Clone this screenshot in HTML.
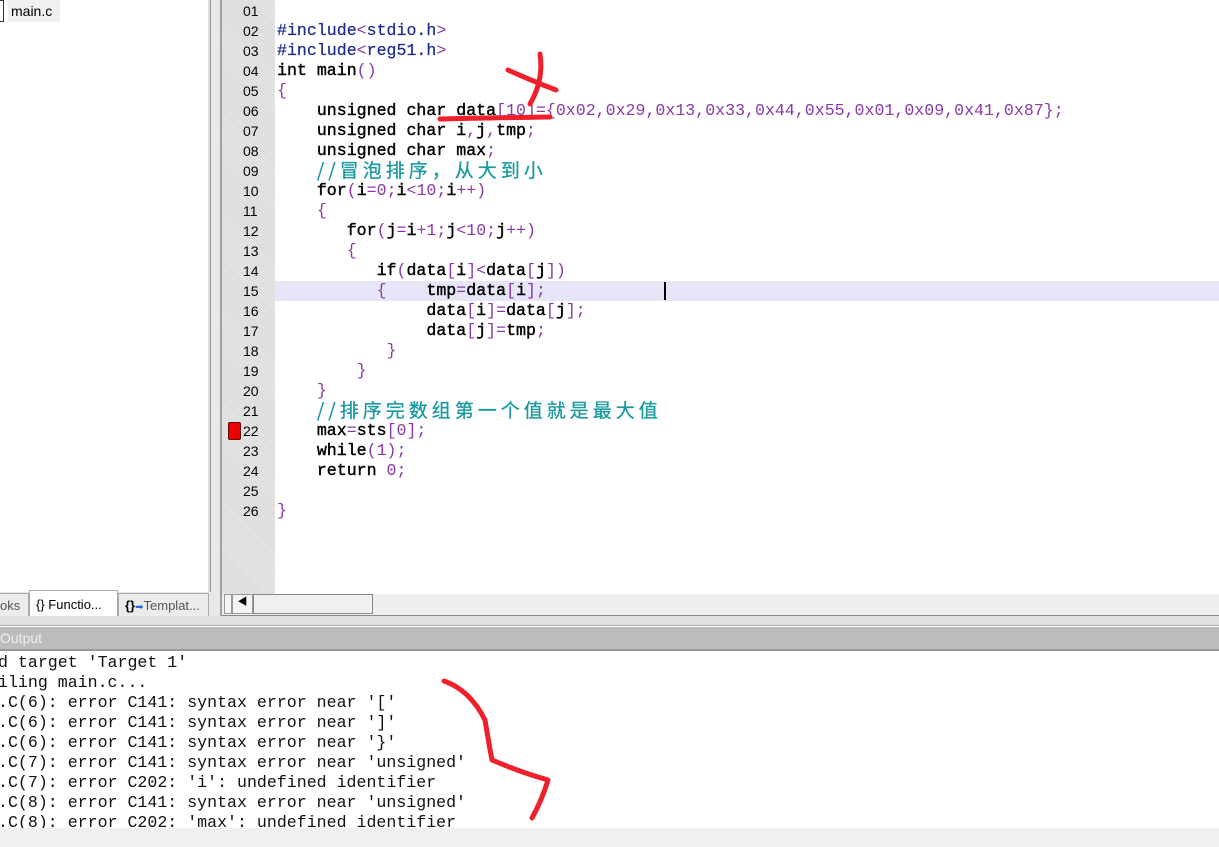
<!DOCTYPE html>
<html><head><meta charset="utf-8"><style>
*{margin:0;padding:0;box-sizing:border-box}
body{width:1219px;height:847px;overflow:hidden;background:#fff;position:relative;font-family:"Liberation Mono","Noto Sans CJK SC",monospace}
.abs{position:absolute}
.gut{left:222px;top:0;width:53px;height:594px;background-color:#e4e4e4;background-image:repeating-linear-gradient(45deg,#d4d4d4 0 1px,#ececec 1px 2px)}
.ln{position:absolute;left:243px;font-family:"Liberation Sans",sans-serif;font-size:14px;color:#000;height:20px;line-height:20px}
.cl{position:absolute;left:277px;font-size:16.6px;height:20px;line-height:20px;white-space:pre;color:#000;-webkit-text-stroke:0.4px #000}
.p{color:#8a3aa8;-webkit-text-stroke:0}
.c{color:#1a9aa0;-webkit-text-stroke:0.3px #1a9aa0;font-family:"Noto Sans CJK SC",sans-serif;font-size:19px;letter-spacing:4px;line-height:18px}
.out{position:absolute;left:-2px;font-size:16.6px;height:20px;line-height:20px;white-space:pre;color:#111}
</style></head><body>
<div class="abs" style="left:0;top:0;width:210px;height:594px;background:#fff"></div>
<div class="abs" style="left:0;top:0;width:4px;height:22px;border:1px solid #333;border-left:none"></div>
<div class="abs" style="left:8px;top:0;width:52px;height:22px;background:#f0f0f0;font-family:'Liberation Sans',sans-serif;font-size:14px;line-height:22px;padding-left:3px;color:#000">main.c</div>
<div class="abs" style="left:208px;top:0;width:3px;height:594px;background:#ddd;border-right:1px solid #999"></div>
<div class="abs" style="left:211px;top:0;width:11px;height:625px;background:#e8e8e8;border-right:2px solid #a0a0a0"></div>
<div class="abs" style="left:0;top:592px;width:220px;height:33px;background:#e8e8e8"></div>
<div class="abs" style="left:0;top:593px;width:29px;height:26px;background:#ececec;border:1px solid #aaa;border-left:none;font:13px 'Liberation Sans',sans-serif;color:#555;line-height:24px">oks</div>
<div class="abs" style="left:29px;top:590px;width:89px;height:29px;background:#fff;border:1px solid #aaa;font:13px 'Liberation Sans',sans-serif;color:#000;line-height:28px;padding-left:6px">{} Functio...</div>
<div class="abs" style="left:118px;top:593px;width:91px;height:26px;background:#ececec;border:1px solid #aaa;font:13px 'Liberation Sans',sans-serif;color:#555;line-height:24px;padding-left:6px"><b style="color:#000">{}</b><span style="color:#1a6ee0;font-size:10px">➡</span>Templat...</div>
<div class="abs gut"></div>
<div class="abs" style="left:275px;top:281px;width:944px;height:20px;background:#e6e6f8"></div>
<div class="abs" style="left:664px;top:282px;width:2px;height:18px;background:#000"></div>
<div class="abs" style="left:228px;top:422px;width:13px;height:18px;background:#e00;border:1px solid #600;border-radius:2px"></div>

<div class="ln" style="top:1px">01</div><div class="ln" style="top:21px">02</div><div class="ln" style="top:41px">03</div><div class="ln" style="top:61px">04</div><div class="ln" style="top:81px">05</div><div class="ln" style="top:101px">06</div><div class="ln" style="top:121px">07</div><div class="ln" style="top:141px">08</div><div class="ln" style="top:161px">09</div><div class="ln" style="top:181px">10</div><div class="ln" style="top:201px">11</div><div class="ln" style="top:221px">12</div><div class="ln" style="top:241px">13</div><div class="ln" style="top:261px">14</div><div class="ln" style="top:281px">15</div><div class="ln" style="top:301px">16</div><div class="ln" style="top:321px">17</div><div class="ln" style="top:341px">18</div><div class="ln" style="top:361px">19</div><div class="ln" style="top:381px">20</div><div class="ln" style="top:401px">21</div><div class="ln" style="top:421px">22</div><div class="ln" style="top:441px">23</div><div class="ln" style="top:461px">24</div><div class="ln" style="top:481px">25</div><div class="ln" style="top:501px">26</div>

<div class="cl" style="top:21px;color:#1a2a8a;-webkit-text-stroke:0.2px #1a2a8a">#include<span class="p">&lt;</span>stdio.h<span class="p">&gt;</span></div>
<div class="cl" style="top:41px;color:#1a2a8a;-webkit-text-stroke:0.2px #1a2a8a">#include<span class="p">&lt;</span>reg51.h<span class="p">&gt;</span></div>
<div class="cl" style="top:61px">int main<span class="p">()</span></div>
<div class="cl" style="top:81px"><span class="p">{</span></div>
<div class="cl" style="top:101px">    unsigned char data<span class="p">[10]={0x02,0x29,0x13,0x33,0x44,0x55,0x01,0x09,0x41,0x87};</span></div>
<div class="cl" style="top:121px">    unsigned char i<span class="p">,</span>j<span class="p">,</span>tmp<span class="p">;</span></div>
<div class="cl" style="top:141px">    unsigned char max<span class="p">;</span></div>
<div class="cl" style="top:161px">    <span class="c">//冒泡排序，从大到小</span></div>
<div class="cl" style="top:181px">    for<span class="p">(</span>i<span class="p">=0;</span>i<span class="p">&lt;10;</span>i<span class="p">++)</span></div>
<div class="cl" style="top:201px">    <span class="p">{</span></div>
<div class="cl" style="top:221px">       for<span class="p">(</span>j<span class="p">=</span>i<span class="p">+1;</span>j<span class="p">&lt;10;</span>j<span class="p">++)</span></div>
<div class="cl" style="top:241px">       <span class="p">{</span></div>
<div class="cl" style="top:261px">          if<span class="p">(</span>data<span class="p">[</span>i<span class="p">]&lt;</span>data<span class="p">[</span>j<span class="p">])</span></div>
<div class="cl" style="top:281px">          <span class="p">{</span>    tmp<span class="p">=</span>data<span class="p">[</span>i<span class="p">];</span></div>
<div class="cl" style="top:301px">               data<span class="p">[</span>i<span class="p">]=</span>data<span class="p">[</span>j<span class="p">];</span></div>
<div class="cl" style="top:321px">               data<span class="p">[</span>j<span class="p">]=</span>tmp<span class="p">;</span></div>
<div class="cl" style="top:341px">           <span class="p">}</span></div>
<div class="cl" style="top:361px">        <span class="p">}</span></div>
<div class="cl" style="top:381px">    <span class="p">}</span></div>
<div class="cl" style="top:401px">    <span class="c">//排序完数组第一个值就是最大值</span></div>
<div class="cl" style="top:421px">    max<span class="p">=</span>sts<span class="p">[0];</span></div>
<div class="cl" style="top:441px">    while<span class="p">(1);</span></div>
<div class="cl" style="top:461px">    return <span class="p">0;</span></div>
<div class="cl" style="top:501px"><span class="p">}</span></div>

<div class="abs" style="left:222px;top:594px;width:997px;height:22px;background:#efefef;border-bottom:1px solid #888"></div>
<div class="abs" style="left:224px;top:594px;width:8px;height:20px;border:1px solid #999;background:#f4f4f4"></div>
<div class="abs" style="left:232px;top:594px;width:21px;height:20px;border:1px solid #999;background:#f4f4f4;font-size:10px;line-height:18px;text-align:center">◀</div>
<div class="abs" style="left:253px;top:594px;width:120px;height:20px;border:1px solid #888;background:#f0f0f0"></div>
<div class="abs" style="left:0;top:616px;width:1219px;height:10px;background:#e0e0e0;border-bottom:1px solid #aaa"></div>
<div class="abs" style="left:0;top:627px;width:1219px;height:24px;background:#bcbcbc;border-bottom:2px solid #999;font:14px 'Liberation Sans',sans-serif;color:#eee;line-height:22px">Output</div>
<div class="out" style="top:653px">d target 'Target 1'</div>
<div class="out" style="top:673px">iling main.c...</div>
<div class="out" style="top:693px">.C(6): error C141: syntax error near '['</div>
<div class="out" style="top:713px">.C(6): error C141: syntax error near ']'</div>
<div class="out" style="top:733px">.C(6): error C141: syntax error near '}'</div>
<div class="out" style="top:753px">.C(7): error C141: syntax error near 'unsigned'</div>
<div class="out" style="top:773px">.C(7): error C202: 'i': undefined identifier</div>
<div class="out" style="top:793px">.C(8): error C141: syntax error near 'unsigned'</div>
<div class="out" style="top:813px">.C(8): error C202: 'max': undefined identifier</div>
<div class="abs" style="left:0;top:828px;width:1219px;height:19px;background:#f0f0f0"></div>

<svg class="abs" style="left:0;top:0" width="1219" height="847">
<g fill="none" stroke="#f0202a" stroke-width="5" stroke-linecap="round" stroke-linejoin="round">
<path d="M440 119 Q480 118 550 117"/>
<path d="M508 70 Q530 80 556 90"/>
<path d="M540 54 Q544 80 530 104"/>
<path d="M444 681 Q470 690 485 720 Q490 750 492 760 Q520 772 548 780 Q542 800 532 818"/>
</g></svg>
</body></html>
